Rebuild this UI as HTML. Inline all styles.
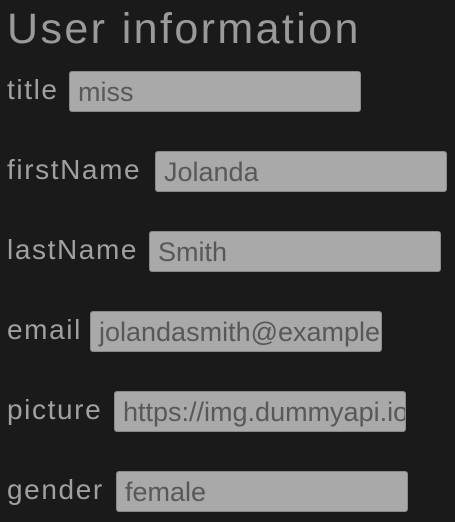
<!DOCTYPE html>
<html><head><style>
html,body{margin:0;padding:0;background:#1a1a1a;width:455px;height:522px;overflow:hidden;}
body{position:relative;font-family:"Liberation Sans",sans-serif;}
h1{position:absolute;left:7px;top:4px;margin:0;font-weight:normal;font-size:43px;letter-spacing:2.4px;color:#9a9a9a;line-height:50px;white-space:nowrap;}
.l{position:absolute;left:7px;font-size:28px;color:#a0a0a0;letter-spacing:1.6px;line-height:30px;white-space:nowrap;}
.i{position:absolute;width:282px;height:39px;background:#a9a9a9;border:1px solid #8a8a8a;border-radius:3px;overflow:hidden;font-size:27px;color:#585858;line-height:40px;padding-left:8px;box-sizing:content-box;white-space:nowrap;}
</style></head><body>
<h1>User information</h1>
<div class="l" style="top:75px">title</div><div class="i" style="left:69px;top:71px">miss</div>
<div class="l" style="top:155px">firstName</div><div class="i" style="left:155px;top:151px">Jolanda</div>
<div class="l" style="top:235px">lastName</div><div class="i" style="left:149px;top:231px">Smith</div>
<div class="l" style="top:315px">email</div><div class="i" style="left:90px;top:311px">jolandasmith@example.com</div>
<div class="l" style="top:395px">picture</div><div class="i" style="left:114px;top:391px">https://img.dummyapi.io/photo</div>
<div class="l" style="top:475px">gender</div><div class="i" style="left:116px;top:471px">female</div>
</body></html>
